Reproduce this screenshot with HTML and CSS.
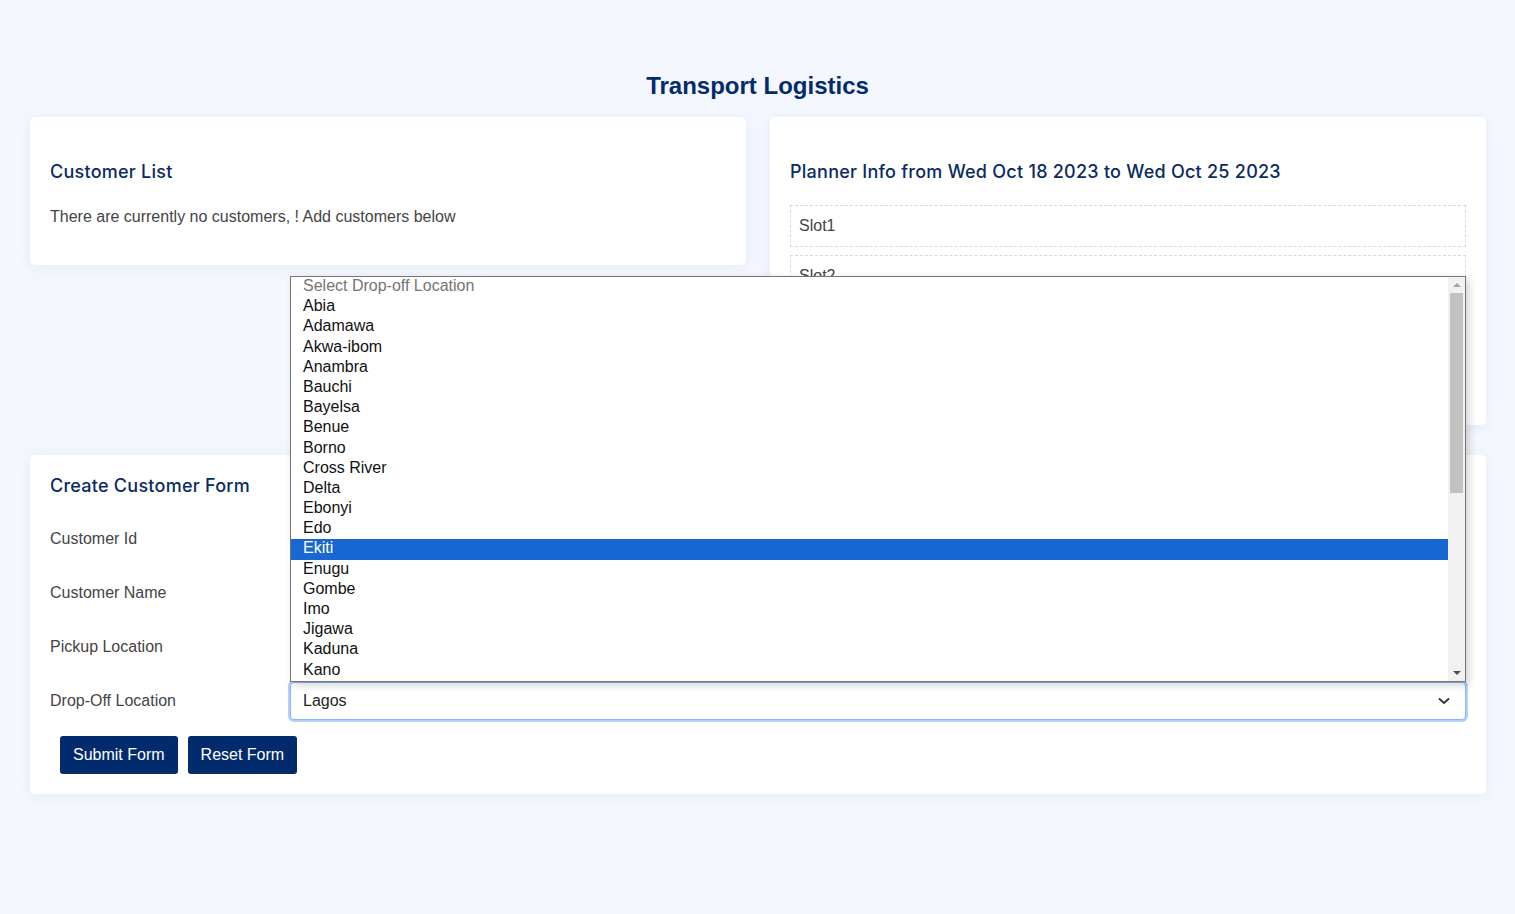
FILE: index.html
```html
<!DOCTYPE html>
<html lang="en">
<head>
<meta charset="utf-8">
<title>Transport Logistics</title>
<link rel="stylesheet" href="styles.css">
</head>
<body>
<header class="page-header">
  <h1 class="page-title">Transport Logistics</h1>
</header>
<main class="container">
  <div class="top-grid">
    <section class="card list-card">
      <h2 class="card-title">Customer List</h2>
      <p class="muted">There are currently no customers, ! Add customers below</p>
    </section>
    <section class="card planner-card">
      <h2 class="card-title">Planner Info from Wed Oct 18 2023 to Wed Oct 25 2023</h2>
      <div class="slots">
        <div class="slot">Slot1</div>
        <div class="slot">Slot2</div>
        <div class="slot">Slot3</div>
        <div class="slot">Slot4</div>
      </div>
    </section>
  </div>

  <section class="card form-card">
    <h2 class="card-title">Create Customer Form</h2>
    <form class="form">
      <div class="form-row">
        <label class="form-label">Customer Id</label>
        <div class="field"><input class="input" type="text"></div>
      </div>
      <div class="form-row">
        <label class="form-label">Customer Name</label>
        <div class="field"><input class="input" type="text"></div>
      </div>
      <div class="form-row">
        <label class="form-label">Pickup Location</label>
        <div class="field"><input class="input" type="text"></div>
      </div>
      <div class="form-row">
        <label class="form-label">Drop-Off Location</label>
        <div class="field select-field">
          <div class="select-box">
            <span>Lagos</span>
            <svg class="chevron" width="12" height="8" viewBox="0 0 12 8"><path d="M1 1.5 L6 6 L11 1.5" fill="none" stroke="#333" stroke-width="1.8"/></svg>
          </div>
          <div class="popup">
            <ul class="options">
              <li class="option placeholder">Select Drop-off Location</li>
              <li class="option">Abia</li>
              <li class="option">Adamawa</li>
              <li class="option">Akwa-ibom</li>
              <li class="option">Anambra</li>
              <li class="option">Bauchi</li>
              <li class="option">Bayelsa</li>
              <li class="option">Benue</li>
              <li class="option">Borno</li>
              <li class="option">Cross River</li>
              <li class="option">Delta</li>
              <li class="option">Ebonyi</li>
              <li class="option">Edo</li>
              <li class="option active">Ekiti</li>
              <li class="option">Enugu</li>
              <li class="option">Gombe</li>
              <li class="option">Imo</li>
              <li class="option">Jigawa</li>
              <li class="option">Kaduna</li>
              <li class="option">Kano</li>
            </ul>
            <div class="scrollbar">
              <span class="arrow up"></span>
              <div class="track"><div class="thumb"></div></div>
              <span class="arrow down"></span>
            </div>
          </div>
        </div>
      </div>
      <div class="actions">
        <button type="button" class="btn">Submit Form</button>
        <button type="button" class="btn">Reset Form</button>
      </div>
    </form>
  </section>
</main>
</body>
</html>
```

FILE: styles.css
```css
* { box-sizing: border-box; }

body {
  margin: 0;
  background: #f4f7fe;
  font-family: "Liberation Sans", Arial, sans-serif;
  font-size: 16px;
  color: #444;
}

.page-header {
  padding-top: 70px;
  text-align: center;
}

.page-title {
  margin: 0;
  font-family: "Liberation Sans", Arial, sans-serif;
  font-weight: 700;
  font-size: 24px;
  line-height: 32px;
  color: #022b6d;
}

.container {
  padding: 15px 29px 100px 30px;
}

.top-grid {
  display: grid;
  grid-template-columns: 1fr 1fr;
  column-gap: 24px;
  align-items: start;
}

.card {
  background: #fff;
  border-radius: 5px;
  box-shadow: 0 2px 14px rgba(160, 175, 215, 0.18);
  padding: 20px;
}

.card-title {
  margin: 22px 0 0;
  font-family: "Inter", "Noto Sans", sans-serif;
  font-weight: 500;
  font-size: 18px;
  line-height: 26px;
  letter-spacing: 0.25px;
  color: #0b2a63;
}

.muted {
  margin: 22px 0 18px;
  line-height: 20px;
  color: #444;
}

.slots {
  display: flex;
  flex-direction: column;
  gap: 8px;
  margin-top: 20px;
  padding-bottom: 8px;
}

.slot {
  height: 42px;
  border: 1px dashed #d8d8d8;
  padding: 0 8px;
  display: flex;
  align-items: center;
  color: #444;
}

.form-card {
  margin-top: 30px;
  padding-top: 18px;
}

.form-card .card-title { margin-top: 0; }

.form {
  margin-top: 21px;
  display: flex;
  flex-direction: column;
  gap: 16px;
}

.form-row {
  display: flex;
  align-items: center;
  height: 38px;
}

.form-label {
  width: 240px;
  flex: none;
  color: #444;
}

.field {
  flex: 1;
  position: relative;
  height: 38px;
}

.input {
  width: 100%;
  height: 38px;
  border: 1px solid #ccc;
  border-radius: 4px;
  font: inherit;
}

.select-box {
  height: 38px;
  border: 1px solid #86b7fe;
  border-radius: 4px;
  box-shadow: 0 0 0 2px rgba(120, 170, 245, 0.55);
  display: flex;
  align-items: center;
  justify-content: space-between;
  padding: 0 15px 0 12px;
  color: #222;
  background: #fff;
}

.popup {
  position: absolute;
  left: 0;
  right: 0;
  bottom: 100%;
  height: 406px;
  background: #fff;
  border: 1px solid #767676;
  box-shadow: 3px 3px 8px rgba(0, 0, 0, 0.18);
  display: flex;
  z-index: 10;
}

.options {
  list-style: none;
  margin: 0;
  padding: 0;
  flex: 1;
}

.option {
  height: 20.2px;
  line-height: 18.5px;
  padding-left: 12px;
  color: #111;
  white-space: nowrap;
}

.option.placeholder { color: #757575; }

.option.active {
  background: #1967d2;
  color: #fff;
}

.scrollbar {
  width: 17px;
  flex: none;
  background: #f1f1f1;
  display: flex;
  flex-direction: column;
  align-items: center;
}

.arrow {
  width: 0;
  height: 0;
  border-left: 4px solid transparent;
  border-right: 4px solid transparent;
  margin: 6px 0;
}

.arrow.up { border-bottom: 4px solid #a3a3a3; }
.arrow.down { border-top: 4px solid #505050; }

.track {
  flex: 1;
  width: 100%;
  padding: 0 2px;
}

.thumb {
  height: 200px;
  background: #c1c1c1;
}

.actions {
  display: flex;
  gap: 10px;
  padding-left: 10px;
}

.btn {
  height: 38px;
  padding: 0 13px 0 13px;
  border: none;
  border-radius: 3px;
  background: #022b6d;
  color: #fff;
  font-family: "Liberation Sans", Arial, sans-serif;
  font-size: 16px;
}
```
